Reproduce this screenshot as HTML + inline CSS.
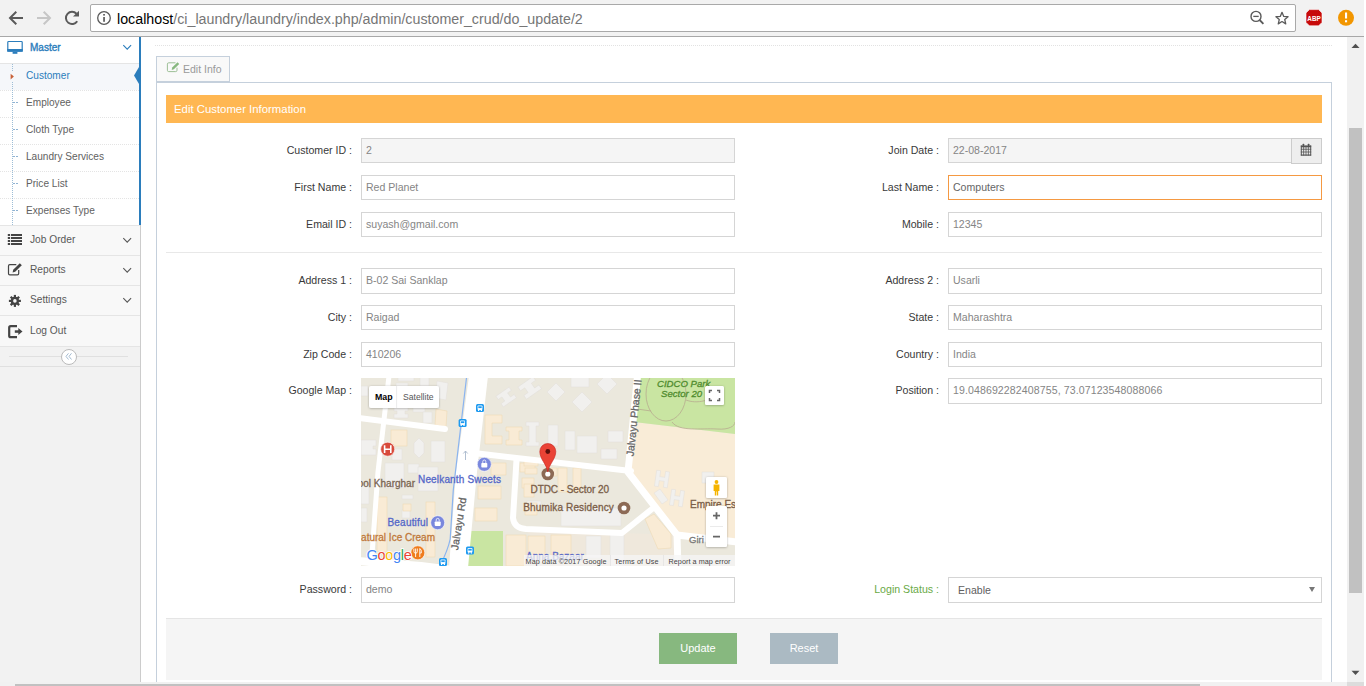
<!DOCTYPE html>
<html><head><meta charset="utf-8">
<style>
*{box-sizing:border-box;margin:0;padding:0}
html,body{width:1366px;height:686px;overflow:hidden;background:#fff;font-family:"Liberation Sans",sans-serif;position:relative}
.a{position:absolute}
#tb{left:0;top:0;width:1364px;height:37px;background:#f2f2f2;border-bottom:1px solid #a8a8a8}
#omni{left:90px;top:4px;width:1206px;height:28px;background:#fff;border:1px solid #a9a9a9;border-radius:2px}
.url{left:117px;top:11px;font-size:14.25px;color:#767676;white-space:nowrap;letter-spacing:0}
.url b{font-weight:normal;color:#000}
#side{left:0;top:37px;width:141px;height:649px;background:#f2f2f2;border-right:1px solid #ccc}
.nav{left:0;width:140px;background:#f8f8f8;border-bottom:1px solid #e5e5e5}
.navt{font-size:10.2px;color:#585858;white-space:nowrap}
.sub{left:0;width:139px;height:27px;background:#fff;border-top:1px dotted #e4e4e4}
.subt{left:26px;font-size:10.1px;color:#616161;white-space:nowrap}
.lbl{font-size:10.6px;color:#393939;white-space:nowrap;text-align:right}
.inp{height:25px;border:1px solid #d5d5d5;background:#fff;font-size:10.55px;color:#858585;padding:5px 0 0 4px;white-space:nowrap}
.ro{background:#f5f5f5}
</style></head><body>
<!-- toolbar -->
<div id="tb" class="a"></div>
<div id="omni" class="a"></div>
<div class="a url"><b>localhost</b>/ci_laundry/laundry/index.php/admin/customer_crud/do_update/2</div>
<div class="a" style="left:1364px;top:0;width:2px;height:686px;background:#fff"></div>

<!-- sidebar -->
<div id="side" class="a"></div>
<div class="a" style="left:0;top:37px;width:139px;height:27px;background:#fff;border-bottom:1px solid #e5e5e5"></div>
<div class="a navt" style="left:30px;top:42px;color:#2b7dbc;font-size:10px;-webkit-text-stroke:0.35px #2b7dbc">Master</div>
<div class="a" style="left:0;top:64px;width:139px;height:161px;background:#fff"></div>
<div class="a" style="left:0;top:64px;width:139px;height:26px;background:#f5f7fa"></div>
<div class="a" style="left:0;top:90px;width:139px;border-top:1px dotted #e4e4e4"></div>
<div class="a" style="left:0;top:117px;width:139px;border-top:1px dotted #e4e4e4"></div>
<div class="a" style="left:0;top:144px;width:139px;border-top:1px dotted #e4e4e4"></div>
<div class="a" style="left:0;top:171px;width:139px;border-top:1px dotted #e4e4e4"></div>
<div class="a" style="left:0;top:198px;width:139px;border-top:1px dotted #e4e4e4"></div>
<div class="a" style="left:12px;top:64px;height:161px;border-left:1px dotted #9dbdd6"></div>
<div class="a subt" style="top:70px;color:#2b7dbc">Customer</div>
<div class="a subt" style="top:97px">Employee</div>
<div class="a subt" style="top:124px">Cloth Type</div>
<div class="a subt" style="top:151px">Laundry Services</div>
<div class="a subt" style="top:178px">Price List</div>
<div class="a subt" style="top:205px">Expenses Type</div>
<div class="a" style="left:139px;top:37px;width:2px;height:188px;background:#2b7dbc"></div>

<div class="a nav" style="top:225px;height:31px;border-top:1px solid #e5e5e5"></div>
<div class="a nav" style="top:255px;height:31px;border-top:1px solid #e5e5e5"></div>
<div class="a nav" style="top:285px;height:31px;border-top:1px solid #e5e5e5"></div>
<div class="a nav" style="top:315px;height:32px;border-top:1px solid #e5e5e5"></div>
<div class="a navt" style="left:30px;top:234px">Job Order</div>
<div class="a navt" style="left:30px;top:264px">Reports</div>
<div class="a navt" style="left:30px;top:294px">Settings</div>
<div class="a navt" style="left:30px;top:325px">Log Out</div>
<div class="a" style="left:0;top:346px;width:140px;height:21px;border-bottom:1px solid #e0e0e0"></div>
<div class="a" style="left:9px;top:356px;width:119px;height:1px;background:#e0e0e0"></div>
<div class="a" style="left:61px;top:349px;width:16px;height:16px;border-radius:50%;border:1px solid #bbb;background:#fff"></div>

<!-- toolbar icons -->
<svg class="a" style="left:0;top:0" width="1366" height="37" viewBox="0 0 1366 37">
 <g fill="none" stroke="#5a5a5a" stroke-width="2" stroke-linecap="butt">
  <path d="M23 18H10.5M16.3 11.8L10 18l6.3 6.2"/>
 </g>
 <g fill="none" stroke="#c6c6c6" stroke-width="2">
  <path d="M37 18h12.5M43.7 11.8L50 18l-6.3 6.2"/>
 </g>
 <path d="M77.2 21.2A6.1 6.1 0 1 1 76.5 13.8" fill="none" stroke="#5a5a5a" stroke-width="2"/>
 <path d="M73 16.6L79 10.8V16.6Z" fill="#5a5a5a"/>
 <circle cx="104" cy="18" r="6.3" fill="none" stroke="#5a5a5a" stroke-width="1.3"/>
 <rect x="103.2" y="14" width="1.7" height="1.6" fill="#5a5a5a"/>
 <rect x="103.2" y="17" width="1.7" height="4.8" fill="#5a5a5a"/>
 <circle cx="1256" cy="16.4" r="5" fill="none" stroke="#5a5a5a" stroke-width="1.4"/>
 <path d="M1253.3 16.4h5.4" stroke="#5a5a5a" stroke-width="1.3"/>
 <path d="M1259.6 20l3.8 3.8" stroke="#5a5a5a" stroke-width="1.8"/>
 <path d="M1282 12.3l1.75 4.1 4.3.35-3.3 2.85 1 4.25-3.75-2.3-3.75 2.3 1-4.25-3.3-2.85 4.3-.35z" fill="none" stroke="#5a5a5a" stroke-width="1.3" stroke-linejoin="round"/>
 <path d="M1309.4 9.6h9.2l3.4 3.4v9.4l-3.4 3.4h-9.2l-3.4-3.4v-9.4z" fill="#c70a0a" stroke="#fff" stroke-width="0.6"/>
 <text x="1307.3" y="20.8" font-family="Liberation Sans" font-weight="bold" font-size="7.4" fill="#fff" textLength="13.4" lengthAdjust="spacingAndGlyphs">ABP</text>
 <circle cx="1346" cy="17.8" r="8" fill="#f29600"/>
 <rect x="1345" y="12.5" width="2.1" height="6" fill="#fff"/>
 <rect x="1345" y="20.2" width="2.1" height="2.1" fill="#fff"/>
</svg>
<!-- sidebar icons -->
<svg class="a" style="left:0;top:37px" width="141" height="330" viewBox="0 37 141 330">
 <rect x="7.8" y="41.5" width="14.4" height="9.5" rx="0.8" fill="none" stroke="#2b7dbc" stroke-width="1.2"/>
 <rect x="7.2" y="49" width="15.6" height="2.8" fill="#2b7dbc"/>
 <rect x="12.6" y="51.8" width="4.8" height="2" fill="#2b7dbc"/>
 <path d="M123.3 45.2l3.9 3.9 3.9-3.9" fill="none" stroke="#2b7dbc" stroke-width="1.1"/>
 <path d="M139 67L134 75.5L139 84Z" fill="#2b7dbc"/>
 <rect x="12" y="71" width="1" height="11" fill="#f5f7fa"/><path d="M10.6 73.8v5.6l3.3-2.8z" fill="#c86139"/>
 <g stroke="#8fb3d3" stroke-width="1">
  <path d="M13 102.5h2M16 102.5h2M13 129.5h2M16 129.5h2M13 156.5h2M16 156.5h2M13 183.5h2M16 183.5h2M13 210.5h2M16 210.5h2"/>
 </g>
 <g fill="#444">
  <rect x="7.8" y="234" width="2.3" height="2"/><rect x="11" y="234" width="11" height="2"/>
  <rect x="7.8" y="237" width="2.3" height="2"/><rect x="11" y="237" width="11" height="2"/>
  <rect x="7.8" y="240" width="2.3" height="2"/><rect x="11" y="240" width="11" height="2"/>
  <rect x="7.8" y="243" width="2.3" height="2"/><rect x="11" y="243" width="11" height="2"/>
 </g>
 <path d="M16.3 264.6H9.8a1.3 1.3 0 0 0-1.3 1.3v7.6a1.3 1.3 0 0 0 1.3 1.3h7.6a1.3 1.3 0 0 0 1.3-1.3v-3.6" fill="none" stroke="#444" stroke-width="1.2"/>
 <path d="M13.2 269.8l6.6-6.6 2 2-6.6 6.6-2.6.7z" fill="#444"/>
 <g fill="#444" transform="translate(14.9 300.9)">
  <circle r="4.1"/>
  <rect x="-1.1" y="-6" width="2.2" height="12"/>
  <rect x="-6" y="-1.1" width="12" height="2.2"/>
  <rect x="-1.1" y="-6" width="2.2" height="12" transform="rotate(45)"/>
  <rect x="-6" y="-1.1" width="12" height="2.2" transform="rotate(45)"/>
 </g>
 <circle cx="14.9" cy="300.9" r="1.8" fill="#f8f8f8"/>
 <path d="M17 326.2h-6.3a1.5 1.5 0 0 0-1.5 1.5v8a1.5 1.5 0 0 0 1.5 1.5H17" fill="none" stroke="#444" stroke-width="2.2"/>
 <rect x="14.8" y="330.3" width="4.5" height="2.5" fill="#444"/>
 <path d="M18.3 328l4.2 3.5-4.2 3.5z" fill="#444"/>
 <path d="M138 0" />
 <path d="M123.3 238.2l3.9 3.9 3.9-3.9M123.3 268.2l3.9 3.9 3.9-3.9M123.3 298.2l3.9 3.9 3.9-3.9" fill="none" stroke="#585858" stroke-width="1.1"/>
 <path d="M68.5 353.3l-2.5 3.1 2.5 3.1M71.5 353.3l-2.5 3.1 2.5 3.1" fill="none" stroke="#9ab3cc" stroke-width="0.9"/>
</svg>

<!-- main -->
<div class="a" style="left:155px;top:45px;width:1177px;border-top:1px dotted #e2e2e2"></div>
<div class="a" style="left:156px;top:82px;width:1176px;height:604px;border:1px solid #c5d0dc"></div>
<div class="a" style="left:156px;top:56px;width:74px;height:26px;background:#f9f9f9;border:1px solid #c5d0dc"></div>
<div class="a" style="left:183px;top:63px;font-size:10.5px;color:#999">Edit Info</div>
<div class="a" style="left:166px;top:95px;width:1156px;height:28px;background:#ffb752"></div>
<div class="a" style="left:174px;top:103px;font-size:11.37px;color:#fff">Edit Customer Information</div>

<!-- form -->
<div class="a lbl" style="left:166px;top:144px;width:186px">Customer ID :</div>
<div class="a inp ro" style="left:361px;top:138px;width:374px;height:25px">2</div>
<div class="a lbl" style="left:753px;top:144px;width:186px">Join Date :</div>
<div class="a inp ro" style="left:948px;top:138px;width:344px;height:25px">22-08-2017</div>
<div class="a" style="left:1291px;top:138px;width:31px;height:26px;background:#eee;border:1px solid #ccc"></div>
<div class="a lbl" style="left:166px;top:181px;width:186px">First Name :</div>
<div class="a inp" style="left:361px;top:175px;width:374px;height:25px">Red Planet</div>
<div class="a lbl" style="left:753px;top:181px;width:186px">Last Name :</div>
<div class="a inp" style="left:948px;top:175px;width:374px;height:25px;border-color:#f59942;color:#666">Computers</div>
<div class="a lbl" style="left:166px;top:218px;width:186px">Email ID :</div>
<div class="a inp" style="left:361px;top:212px;width:374px;height:25px">suyash@gmail.com</div>
<div class="a lbl" style="left:753px;top:218px;width:186px">Mobile :</div>
<div class="a inp" style="left:948px;top:212px;width:374px;height:25px">12345</div>
<div class="a lbl" style="left:166px;top:274px;width:186px">Address 1 :</div>
<div class="a inp" style="left:361px;top:268px;width:374px;height:26px">B-02 Sai Sanklap</div>
<div class="a lbl" style="left:753px;top:274px;width:186px">Address 2 :</div>
<div class="a inp" style="left:948px;top:268px;width:374px;height:26px">Usarli</div>
<div class="a lbl" style="left:166px;top:311px;width:186px">City :</div>
<div class="a inp" style="left:361px;top:305px;width:374px;height:25px">Raigad</div>
<div class="a lbl" style="left:753px;top:311px;width:186px">State :</div>
<div class="a inp" style="left:948px;top:305px;width:374px;height:25px">Maharashtra</div>
<div class="a lbl" style="left:166px;top:348px;width:186px">Zip Code :</div>
<div class="a inp" style="left:361px;top:342px;width:374px;height:25px">410206</div>
<div class="a lbl" style="left:753px;top:348px;width:186px">Country :</div>
<div class="a inp" style="left:948px;top:342px;width:374px;height:25px">India</div>
<div class="a lbl" style="left:166px;top:384px;width:186px">Google Map :</div>
<div class="a lbl" style="left:753px;top:384px;width:186px">Position :</div>
<div class="a inp" style="left:948px;top:378px;width:374px;height:26px;letter-spacing:0.11px">19.048692282408755, 73.07123548088066</div>
<div class="a lbl" style="left:166px;top:583px;width:186px">Password :</div>
<div class="a inp" style="left:361px;top:577px;width:374px;height:26px">demo</div>
<div class="a lbl" style="left:753px;top:583px;width:186px;color:#69aa46">Login Status :</div>
<div class="a inp" style="left:948px;top:577px;width:374px;height:26px;color:#606060;padding-left:9px;padding-top:6px">Enable</div>
<div class="a" style="left:166px;top:252px;width:1156px;height:1px;background:#e8e8e8"></div>
<!-- map -->
<svg class="a" style="left:361px;top:378px" width="374" height="188" viewBox="0 0 374 188">
 <defs><clipPath id="mc"><rect width="374" height="188"/></clipPath>
 <filter id="sh" x="-20%" y="-20%" width="140%" height="140%"><feDropShadow dx="0" dy="0.5" stdDeviation="0.8" flood-opacity="0.3"/></filter></defs>
 <g clip-path="url(#mc)" font-family="Liberation Sans">
 <rect width="374" height="188" fill="#ebe8dd"/>
 <!-- beige zone -->
 <path d="M273 44L374 56V162L317 157L267 94Z" fill="#f9ecd7"/>
 <path d="M165 151L261 155L316 157L317 188H250L187 188Z" fill="#efe8dc"/>
 <!-- park -->
 <path d="M279 0H374V56L273 44Z" fill="#c9e5a2"/>
 <g fill="none" stroke="#b8ab8f" stroke-width="0.8">
  <ellipse cx="305" cy="16" rx="20" ry="27"/>
  <path d="M311 44C318 54 340 50 356 51C368 52 374 48 374 44M325 22C335 26 352 24 360 10"/>
  <path d="M276 31L290 33"/>
 </g>
 <rect x="107" y="153" width="35" height="40" fill="#c9e5a2"/>
 <!-- gray buildings -->
 <g fill="#f1f0ee" stroke="#e2dfda" stroke-width="0.5">
  <rect x="0" y="8" width="7" height="10"/>
  <rect x="37" y="-2" width="16" height="5"/>
  <rect x="59" y="-2" width="9" height="10"/>
  <path d="M76 3L87 5L85 22L74 20Z"/>
  <rect x="35" y="5" width="12" height="9"/>
  <path d="M33 29h14v4h-3v3h3v4H33v-4h3v-3h-3z"/>
  <rect x="52" y="29" width="12" height="5"/>
  <rect x="62" y="34" width="9" height="11"/>
  <path d="M0 62h15v6h-3v3h3v6H0z"/>
  <path d="M58 60l5 5v10l-5 5-5-5V65z"/>
  <rect x="70" y="63" width="14" height="21"/>
  <rect x="31" y="71" width="10" height="11"/>
  <rect x="24" y="85" width="19" height="25"/>
  <rect x="47" y="86" width="11" height="9"/>
  <rect x="57" y="89" width="20" height="24"/>
  <path transform="translate(145.2 19) rotate(-35)" d="M-8-6.5H8V-2.5H3.5V2.5H8V6.5H-8V2.5H-3.5V-2.5H-8Z"/>
  <path transform="translate(168.7 9.9) rotate(-35) scale(1.15)" d="M-8-6.5H8V-2.5H3.5V2.5H8V6.5H-8V2.5H-3.5V-2.5H-8Z"/>
  <path d="M165 44h13v4h-3v16h3v4h-13v-4h3V48h-3z"/>
  <path d="M195 5l9 9-9 9-9-9z"/>
  <path d="M221 14l10 10-10 10-10-10z"/>
  <rect x="210" y="-2" width="18" height="11"/>
  <path d="M246 -4l10 10-10 10-10-10z"/>
  <rect x="187" y="47" width="10" height="21"/>
  <rect x="204" y="53" width="10" height="19"/>
  <rect x="216" y="58" width="20" height="17"/>
  <path d="M247 53h15v11h-15z"/>
  <path d="M240 71h16v10h-16z"/>
  <rect x="0" y="106" width="8" height="20"/>
  <rect x="0" y="130" width="6" height="14"/>
  
  <rect x="41" y="117" width="11" height="4"/>
  <rect x="41" y="132" width="8" height="8"/>
  <rect x="166" y="123" width="14" height="5"/>
  <rect x="200" y="130" width="60" height="18"/>
  <path d="M293 115l6-4 8 11-6 4z"/>
  <path transform="translate(301 101) rotate(8)" d="M-6.5-8h4v6h5v-6h4v16h-4v-6h-5v6h-4z"/>
  <path transform="translate(316 120) rotate(8)" d="M-6.5-8h4v6h5v-6h4v16h-4v-6h-5v6h-4z"/>
  <rect x="249" y="156" width="14" height="34"/>
  <rect x="225" y="158" width="15" height="22"/>
  <rect x="341" y="94" width="12" height="11"/>
  <rect x="354" y="143" width="10" height="14"/>
 </g>
 <!-- beige buildings -->
 <g fill="#f9ebd5" stroke="#efdab5" stroke-width="0.6">
  <path d="M75 31l11 2-1 16-11-2z"/>
  <rect x="30" y="52" width="16" height="16"/>
  <path d="M124 37h17v8h-10v13h10v8h-17z"/>
  <path d="M145 49h16v4h-3v9h3v5h-16v-5h3v-9h-3z"/>
  <rect x="130" y="85" width="15" height="12"/>
  <rect x="159" y="85" width="15" height="9"/>
  <rect x="163" y="82" width="14" height="6"/>
  <rect x="164" y="90" width="12" height="6"/>
  <rect x="161" y="100" width="12" height="10"/>
  <rect x="197" y="90" width="9" height="24"/>
  <rect x="212" y="90" width="8" height="24"/>
  <rect x="16" y="119" width="10" height="55"/>
  <rect x="65" y="124" width="9" height="55"/>
  <rect x="42" y="126" width="8" height="7"/>
  <rect x="117" y="108" width="23" height="13"/>
  <rect x="114" y="130" width="22" height="13"/>
  <rect x="163" y="106" width="10" height="13"/>
  <rect x="164" y="125" width="12" height="12"/>
  <path d="M284 141l9-5 17 20v14l-13 1z"/>
  <rect x="145" y="157" width="20" height="31"/>
  <rect x="167" y="158" width="17" height="27"/>
  <rect x="190" y="90" width="6" height="8"/>
  <rect x="190" y="157" width="20" height="20"/>
 </g>
 <!-- roads -->
 <g fill="none" stroke="#fff" stroke-linecap="round" stroke-linejoin="round">
  <path d="M28 -2L17 94L10 190" stroke-width="5"/>
  <path d="M-2 40L84 51" stroke-width="6"/>
  <path d="M-4 183L60 188L92 192" stroke-width="8"/>
  <path d="M117 75.5L270 93" stroke-width="6"/>
  <path d="M276.5 -2L267 94L316 157L317 190M316 157L376 164" stroke-width="7"/>
  <path d="M155.5 82L152 140Q153 150 165 151L261 155L291 131" stroke-width="6"/>
 </g>
 <path d="M108 -2H127L116 94L107 190H88L95 94Z" fill="#fff"/>
 <path d="M105.7 -2L92.3 112L89.2 161Q87 172 78 190" fill="none" stroke="#8ab4f0" stroke-width="1.2"/>
 <path d="M104.5 82V73M102.3 75.5L104.5 73L106.7 75.5" fill="none" stroke="#a8b8cc" stroke-width="0.9"/>
 <!-- labels -->
 <g font-size="9.6" stroke-width="0.3">
  <text x="296" y="8.5" fill="#4f8c2e" stroke="#4f8c2e" font-style="italic">CIDCO Park</text>
  <text x="300" y="18.7" fill="#4f8c2e" stroke="#4f8c2e" font-style="italic">Sector 20</text>
  <text transform="translate(272.5 78.5) rotate(-84)" fill="#666" stroke="#666" font-size="10.5">Jalvayu Phase II</text>
  <text transform="translate(97 172.5) rotate(-81)" fill="#666" stroke="#666" font-size="10.5" textLength="53">Jalvayu Rd</text>
  <text x="57" y="105" fill="#5467c8" stroke="#5467c8" font-size="10" textLength="83">Neelkanth Sweets</text>
  <text x="54" y="108.5" fill="#7a6552" stroke="#7a6552" text-anchor="end" font-size="10">ool Kharghar</text>
  <text x="26.5" y="148" fill="#5467c8" stroke="#5467c8" font-size="10" textLength="40.5">Beautiful</text>
  <text x="74" y="163" fill="#c0783a" stroke="#c0783a" text-anchor="end" font-size="10">atural Ice Cream</text>
  <text x="169.5" y="115.2" fill="#7b5e48" stroke="#7b5e48" font-size="10" textLength="78.5">DTDC - Sector 20</text>
  <text x="162.3" y="132.8" fill="#7b5e48" stroke="#7b5e48" font-size="10" textLength="90.5">Bhumika Residency</text>
  <text x="329" y="130.3" fill="#7b5e48" stroke="#7b5e48" font-size="10">Empire Es</text>
  <text x="328" y="165" fill="#777" stroke="#777" font-size="9.5">Giri</text>
  <text x="165" y="181.5" fill="#5c6bc8" stroke="#5c6bc8" font-size="10">Anna Bazaar</text>
 </g>
 <!-- poi icons -->
 <circle cx="26.7" cy="71.2" r="7" fill="#d84a3b" stroke="#fff" stroke-width="0.6"/>
 <path d="M23.6 67.3v7.8M29.8 67.3v7.8M23.6 71.2h6.2" stroke="#fff" stroke-width="1.6"/>
 <g fill="#1e9af0">
  <rect x="115" y="26" width="8" height="8" rx="1.5"/>
  <rect x="97.6" y="41" width="8" height="8" rx="1.5"/>
  <rect x="105" y="168.5" width="8" height="8" rx="1.5"/>
  <rect x="78" y="180" width="8" height="8" rx="1.5"/>
 </g>
<g transform="translate(115 26)"><rect x="1.6" y="1.4" width="4.8" height="4.6" rx="0.8" fill="#fff"/><rect x="2.3" y="2.3" width="3.4" height="1.8" fill="#1e9af0"/><rect x="2" y="5.8" width="1.2" height="1.2" fill="#fff"/><rect x="4.8" y="5.8" width="1.2" height="1.2" fill="#fff"/></g><g transform="translate(97.6 41)"><rect x="1.6" y="1.4" width="4.8" height="4.6" rx="0.8" fill="#fff"/><rect x="2.3" y="2.3" width="3.4" height="1.8" fill="#1e9af0"/><rect x="2" y="5.8" width="1.2" height="1.2" fill="#fff"/><rect x="4.8" y="5.8" width="1.2" height="1.2" fill="#fff"/></g><g transform="translate(105 168.5)"><rect x="1.6" y="1.4" width="4.8" height="4.6" rx="0.8" fill="#fff"/><rect x="2.3" y="2.3" width="3.4" height="1.8" fill="#1e9af0"/><rect x="2" y="5.8" width="1.2" height="1.2" fill="#fff"/><rect x="4.8" y="5.8" width="1.2" height="1.2" fill="#fff"/></g><g transform="translate(78 180)"><rect x="1.6" y="1.4" width="4.8" height="4.6" rx="0.8" fill="#fff"/><rect x="2.3" y="2.3" width="3.4" height="1.8" fill="#1e9af0"/><rect x="2" y="5.8" width="1.2" height="1.2" fill="#fff"/><rect x="4.8" y="5.8" width="1.2" height="1.2" fill="#fff"/></g>
 <g fill="#7987dd" stroke="#fff" stroke-width="0.6">
  <circle cx="123.3" cy="86.3" r="7"/>
  <circle cx="76.7" cy="144.7" r="7"/>
 </g>
 <g fill="#fff">
  <rect x="120.3" y="85" width="6" height="4.5" rx="0.8"/><rect x="73.7" y="143.4" width="6" height="4.5" rx="0.8"/>
 </g>
 <g fill="none" stroke="#fff" stroke-width="0.8">
  <path d="M121.8 85v-1.5a1.5 1.5 0 0 1 3 0V85M75.2 143.4v-1.5a1.5 1.5 0 0 1 3 0v1.5"/>
 </g>
 <circle cx="56.8" cy="174.8" r="7" fill="#ef7b1c" stroke="#fff" stroke-width="0.6"/>
 <path d="M54.6 170.5v8.5M52.9 170.5v3a1.7 1.7 0 0 0 3.4 0v-3M58.8 170.5v8.5M58.8 170.5q2 1 1.5 4.5h-1.5" stroke="#fff" stroke-width="0.9" fill="none"/>
 <circle cx="186.8" cy="96" r="6.3" fill="#8c6a55"/><circle cx="186.8" cy="96" r="2.6" fill="#fff"/>
 <circle cx="263" cy="130" r="6.3" fill="#8c6a55"/><circle cx="263" cy="130" r="2.6" fill="#fff"/>
 <path d="M186.8 94C185.5 86 178.8 81 178.8 73.5a8 8 0 0 1 16 0C194.8 81 188.1 86 186.8 94Z" fill="#ea4335" stroke="#c5221f" stroke-width="0.6"/>
 <circle cx="186.8" cy="73.5" r="2.4" fill="#5c0f0b"/>
 <!-- google logo -->
 <text x="5.5" y="181.5" font-size="14.5" font-family="Liberation Sans" stroke="#fff" stroke-width="1.6" paint-order="stroke" letter-spacing="-0.3"><tspan fill="#4285f4">G</tspan><tspan fill="#ea4335">o</tspan><tspan fill="#fbbc05">o</tspan><tspan fill="#4285f4">g</tspan><tspan fill="#34a853">l</tspan><tspan fill="#ea4335">e</tspan></text>
 <!-- controls -->
 <rect x="8" y="8" width="70" height="22" rx="2" fill="#fff" filter="url(#sh)"/>
 <path d="M35.6 8V30" stroke="#e6e6e6" stroke-width="0.8"/>
 <text x="14" y="22" font-size="8.8" font-weight="bold" fill="#000">Map</text>
 <text x="42" y="22" font-size="8.6" fill="#565656">Satellite</text>
 <rect x="344" y="8" width="19" height="19" rx="1.5" fill="#fff" filter="url(#sh)"/>
 <path d="M348.5 15V12.5H351M356 12.5H358.5V15M358.5 20V22.5H356M351 22.5H348.5V20" fill="none" stroke="#666" stroke-width="1.5"/>
 <rect x="345" y="99" width="21" height="21" rx="1.5" fill="#fff" filter="url(#sh)"/>
 <g fill="#f5b400">
  <circle cx="355.5" cy="104" r="1.9"/>
  <path d="M352.6 106.5h5.8v6.5h-1.2v4.5h-1.4v-4h-0.6v4h-1.4v-4.5h-1.2z"/>
 </g>
 <rect x="345" y="128" width="21" height="41" rx="1.5" fill="#fff" filter="url(#sh)"/>
 <path d="M349 148.5H362" stroke="#e6e6e6" stroke-width="0.8"/>
 <path d="M355.5 134.2v7M352 137.7h7M352 158.7h7" stroke="#666" stroke-width="1.8"/>
 <!-- attribution -->
 <rect x="163" y="177" width="211" height="11" fill="#f5f5f5" fill-opacity="0.75"/>
 <text x="164.5" y="185.5" font-size="7.2" fill="#444" textLength="81">Map data ©2017 Google</text>
 <text x="253.5" y="185.5" font-size="7.2" fill="#444" textLength="44">Terms of Use</text>
 <text x="307.5" y="185.5" font-size="7.2" fill="#444" textLength="62">Report a map error</text>
 <path d="M249.5 177v11M302.5 177v11" stroke="#ddd" stroke-width="0.6"/>
 </g>
</svg>

<div class="a" style="left:166px;top:618px;width:1156px;height:62px;background:#f5f5f5;border-top:1px solid #e5e5e5"></div>
<div class="a" style="left:659px;top:633px;width:78px;height:31px;background:#87b87f;color:#fff;font-size:11px;text-align:center;padding-top:9px">Update</div>
<div class="a" style="left:770px;top:633px;width:68px;height:31px;background:#abbac3;color:#fff;font-size:11px;text-align:center;padding-top:9px">Reset</div>

<!-- scrollbars -->
<div class="a" style="left:1347px;top:37px;width:17px;height:645px;background:#f1f1f1"></div>
<div class="a" style="left:1349px;top:128px;width:13px;height:465px;background:#c1c1c1"></div>
<div class="a" style="left:0;top:682px;width:1347px;height:4px;background:#f1f1f1"></div>
<div class="a" style="left:15px;top:684px;width:1185px;height:2px;background:#c1c1c1"></div>
<div class="a" style="left:1347px;top:682px;width:17px;height:4px;background:#dcdcdc"></div>
<!-- misc icons -->
<svg class="a" style="left:0;top:0" width="1366" height="686" viewBox="0 0 1366 686">
 <path d="M175.5 62.8H168.7a1.3 1.3 0 0 0-1.3 1.3v6.2a1.3 1.3 0 0 0 1.3 1.3h7a1.3 1.3 0 0 0 1.3-1.3v-2.6" fill="none" stroke="#9cbf96" stroke-width="1"/>
 <path d="M172.2 67.6l5.3-5.3 1.7 1.7-5.3 5.3-2.2.6z" fill="#87b87f"/>
 <g fill="#555">
  <rect x="1300.8" y="145.5" width="10.4" height="1.8"/>
  <rect x="1300.8" y="145.5" width="1" height="10"/>
  <rect x="1310.2" y="145.5" width="1" height="10"/>
  <rect x="1300.8" y="154.5" width="10.4" height="1.2"/>
  <rect x="1300.8" y="148.8" width="10.4" height="0.8"/>
  <rect x="1300.8" y="151.6" width="10.4" height="0.8"/>
  <rect x="1303.3" y="145.5" width="0.8" height="10"/>
  <rect x="1305.6" y="145.5" width="0.8" height="10"/>
  <rect x="1307.9" y="145.5" width="0.8" height="10"/>
  <rect x="1302.6" y="143.8" width="1.6" height="2.6" rx="0.5"/>
  <rect x="1307.8" y="143.8" width="1.6" height="2.6" rx="0.5"/>
 </g>
 <path d="M1309 587h6l-3 5z" fill="#777"/>
 <path d="M1351.5 48h8l-4-4.3z" fill="#505050"/>
 <path d="M1351.5 670.8h8l-4 4.3z" fill="#505050"/>
</svg>

</body></html>
